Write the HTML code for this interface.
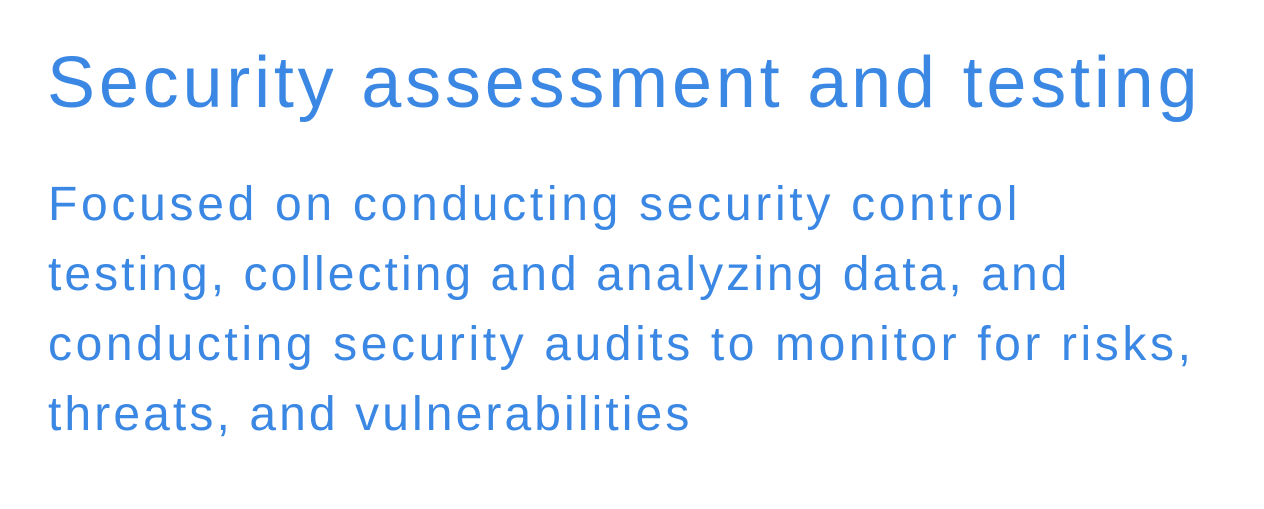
<!DOCTYPE html>
<html><head><meta charset="utf-8"><style>
html,body{margin:0;padding:0;background:#fff;width:1264px;height:509px;overflow:hidden}
.t{position:absolute;left:47px;white-space:nowrap;font-family:"Liberation Sans",sans-serif;color:#3b87e4;line-height:1}
.h{font-size:72px;top:47px;letter-spacing:3.8px}
.b{font-size:48px;letter-spacing:3.4px;left:48px}
</style></head><body>
<div class="t h">Security assessment and testing</div>
<div class="t b" style="top:181px;letter-spacing:3.7px">Focused on conducting security control</div>
<div class="t b" style="top:251px;letter-spacing:3.05px">testing, collecting and analyzing data, and</div>
<div class="t b" style="top:321px;letter-spacing:3.6px">conducting security audits to monitor for risks,</div>
<div class="t b" style="top:391px;letter-spacing:3.1px">threats, and vulnerabilities</div>
</body></html>
